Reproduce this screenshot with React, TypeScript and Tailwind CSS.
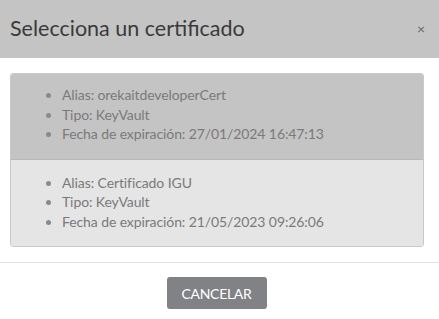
import React from "react";

type Cert = { alias: string; tipo: string; fecha: string };

const certs: Cert[] = [
  { alias: "orekaitdeveloperCert", tipo: "KeyVault", fecha: "27/01/2024 16:47:13" },
  { alias: "Certificado IGU", tipo: "KeyVault", fecha: "21/05/2023 09:26:06" },
];

export default function App() {
  const selected = 0;

  return (
    <div className="w-[439px] h-[319px] bg-white font-['Lato',sans-serif] text-[#7a7a7a]">
      <div className="h-[58px] bg-[#c4c4c4] flex items-center justify-between pl-[10px] pr-[14px]">
        <h4 className="text-[21.5px] text-[#3a3a3a] leading-none">Selecciona un certificado</h4>
        <button className="text-[14px] text-[#666] leading-none">×</button>
      </div>

      <div className="px-[10px] pt-[15px] pb-[15px]">
        <div className="w-[414px] border border-[#c9c9c9] rounded-[3px] overflow-hidden">
          {certs.map((c, i) => (
            <div
              key={c.alias}
              className={
                i === selected
                  ? "h-[86px] bg-[#c4c4c4] border-b border-[#b8b8b8] flex items-center pl-[11px] pb-[4px]"
                  : "h-[86px] bg-[#e5e5e5] flex items-center pl-[11px] pb-[2px]"
              }
            >
              <ul className="list-disc pl-[40px] text-[14px] leading-[19.5px] tracking-[-0.1px] marker:text-[#8a8a8a]">
                <li>Alias: {c.alias}</li>
                <li>Tipo: {c.tipo}</li>
                <li>Fecha de expiración: {c.fecha}</li>
              </ul>
            </div>
          ))}
        </div>
      </div>

      <div className="border-t border-[#e3e3e3] flex justify-center pt-[14px] pr-[6px]">
        <button className="w-[100px] h-[32px] rounded-[3px] bg-[#818286] text-white text-[14px] tracking-[-0.3px]">
          CANCELAR
        </button>
      </div>
    </div>
  );
}
